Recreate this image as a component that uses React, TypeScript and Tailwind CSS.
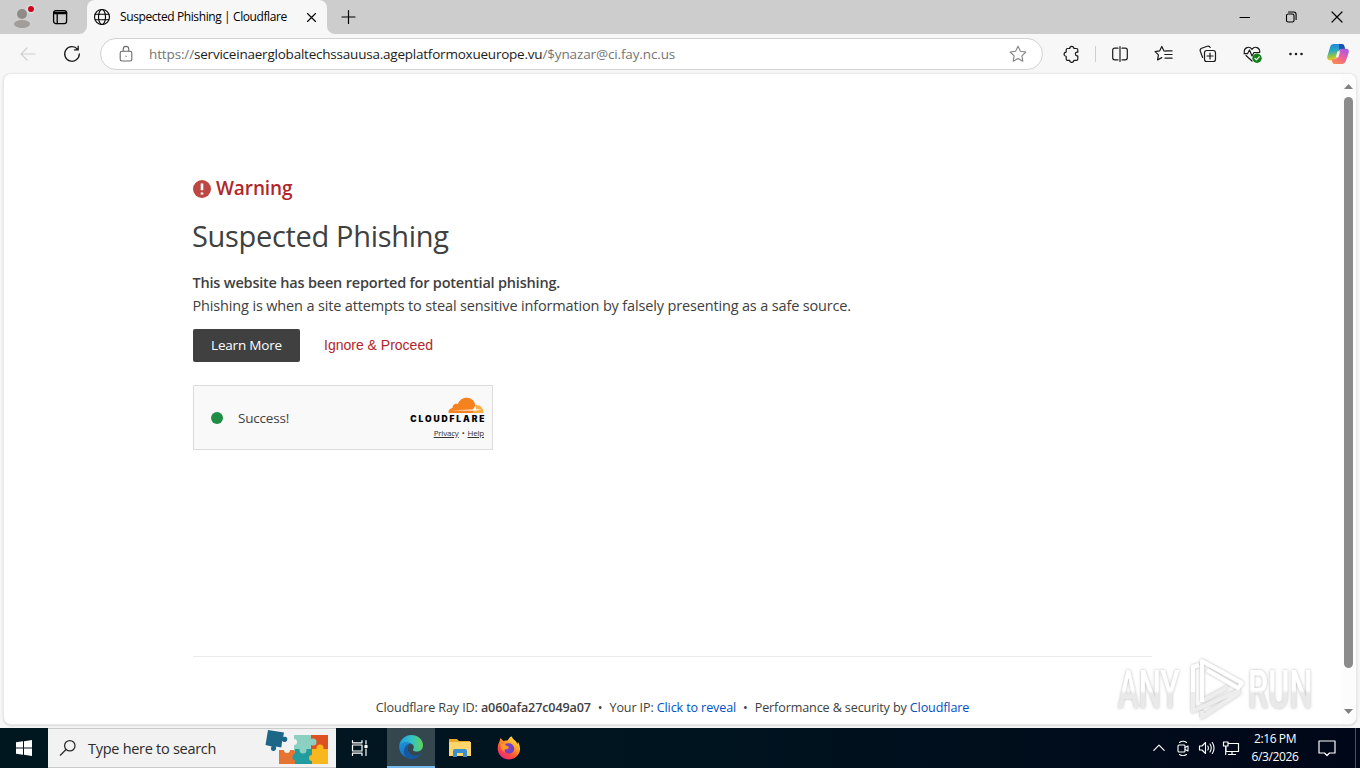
import type { ReactNode } from 'react';

type IconProps = { className?: string; children: ReactNode; box?: string; width?: number };

const Icon = ({ className = 'w-5 h-5', children, box = '0 0 20 20', width = 1.2 }: IconProps) => (
  <svg viewBox={box} className={`block shrink-0 ${className}`} fill="none" stroke="currentColor" strokeWidth={width} strokeLinecap="round" strokeLinejoin="round">
    {children}
  </svg>
);

const TabBar = () => (
  <div className="flex h-[34px] bg-[#cdcdcd] text-black">
    <div className="w-[87px] bg-[#f7f7f7]">
      <div className="flex h-full items-center rounded-br-lg bg-[#cdcdcd]">
        <svg viewBox="0 0 24 24" className="ml-[11px] block h-6 w-6">
          <circle cx="11" cy="9" r="5" fill="#8f8b88" />
          <ellipse cx="11" cy="19" rx="8" ry="4" fill="#a09d9a" />
          <circle cx="20" cy="4" r="4.6" fill="#dcdcdc" />
          <circle cx="20" cy="4" r="3" fill="#d0021b" />
        </svg>
        <Icon className="ml-[15px] h-5 w-5" width={1.3}>
          <rect x="3.6" y="3.6" width="13" height="13" rx="2.4" />
          <path d="M3.6 5.5h13M3.6 6.6h13M7.2 6.6v10" />
        </Icon>
      </div>
    </div>
    <div className="flex w-[240px] items-center rounded-t-lg bg-[#f7f7f7]">
      <Icon className="ml-[5px] h-5 w-5" width={1.1}>
        <circle cx="10" cy="10" r="7.5" />
        <ellipse cx="10" cy="10" rx="3.5" ry="7.5" />
        <path d="M3.2 7.3h13.6M3.2 12.7h13.6" />
      </Icon>
      <span className="ml-2 w-[174px] text-[12px] tracking-[-0.4px] whitespace-nowrap">Suspected Phishing | Cloudflare</span>
      <Icon className="ml-[7px] h-5 w-5" width={1.1}>
        <path d="M6.500 6.500l8 8M14.500 6.500l-8 8" />
      </Icon>
    </div>
    <div className="bg-[#f7f7f7]">
      <div className="h-full rounded-bl-lg bg-[#cdcdcd] pt-[7px] pl-[11px]">
        <Icon className="h-5 w-5" width={1.2}>
          <path d="M10.500 3.500v13M4 10h13" />
        </Icon>
      </div>
    </div>
    <div className="ml-auto flex items-center">
      <Icon className="mr-[26px] h-5 w-5" width={1.1}><path d="M5 10.5h9.5" /></Icon>
      <Icon className="mr-[26px] h-5 w-5" width={1.1}>
        <rect x="5.5" y="7" width="7.5" height="8" rx="1.6" />
        <path d="M7.5 5h5.2a2.4 2.4 0 0 1 2.4 2.4v5" />
      </Icon>
      <Icon className="mr-[13px] h-5 w-5" width={1.2}><path d="M5 5l10 10M15 5L5 15" /></Icon>
    </div>
  </div>
);

const Copilot = () => (
  <svg viewBox="0 0 24 24" className="block h-6 w-6">
    <defs>
      <linearGradient id="copA" x1="0" y1="0" x2="0.2" y2="1">
        <stop offset="0" stopColor="#1b7fe0" />
        <stop offset="0.45" stopColor="#29a9c4" />
        <stop offset="0.75" stopColor="#8bc34a" />
        <stop offset="1" stopColor="#f6c51f" />
      </linearGradient>
      <linearGradient id="copB" x1="0.8" y1="0" x2="0.2" y2="1">
        <stop offset="0" stopColor="#a55ae8" />
        <stop offset="0.5" stopColor="#ef5f9b" />
        <stop offset="1" stopColor="#fb8b4b" />
      </linearGradient>
    </defs>
    <path d="M8 2h7.5c1.6 0 2.3.8 2.8 2.3L19 7h-3c-2 0-2.8.8-3.3 2.4l-2 6.6c-.5 1.8-1.4 2.3-3 2.3H4c-2.3 0-3.3-1.5-2.6-4.2L4 5.400C4.700 3 5.800 2 8 2z" fill="url(#copA)" />
    <path d="M13 2h2.800c1.400 0 2.100.8 2.600 2.300L19 7h-3c-1.400 0-2.300.5-2.800 1.300z" fill="#1c51b5" />
    <path d="M16 22H9c-1.600 0-2.300-.8-2.800-2.300L5.400 17.500H8c2 0 2.800-.8 3.300-2.400l2-6c.5-1.600 1.400-2.300 3-2.300H20c2.300 0 3.300 1.500 2.600 4.200L20 18.600c-.7 2.400-1.800 3.400-4 3.400z" fill="url(#copB)" />
    <path d="M11.500 9.500h2.600l-1.800 6H9.600z" fill="#f7f7f7" />
  </svg>
);

const Toolbar = () => (
  <div className="flex h-[39px] items-center bg-[#f7f7f7] pt-px text-[#1b1b1b]">
    <Icon className="ml-[18px] h-5 w-5 text-[#cfcfcf]"><path d="M17 10H3M9 4l-6 6 6 6" /></Icon>
    <Icon className="ml-6 h-5 w-5" width={1.3}>
      <path d="M15.600 5.300A7.300 7.300 0 1 0 17.300 10M16.200 2.200v3.700h-3.700" />
    </Icon>
    <div className="ml-[18px] flex h-8 w-[943px] items-center rounded-full border border-[#d2d2d2] bg-white">
      <Icon className="ml-[15px] h-5 w-5 text-[#6a6a6a]" width={1.1}>
        <rect x="4.200" y="7.300" width="11.600" height="9.700" rx="1.800" />
        <path d="M7.200 7V5.200a2.800 2.800 0 0 1 5.600 0V7M10 12.100v.3" />
      </Icon>
      <span className="ml-[13px] w-[700px] text-[13.500px] tracking-[-0.13px] whitespace-nowrap text-[#757575]">
        https://<span className="tracking-[-0.22px] text-[#1b1b1b]">serviceinaerglobaltechssauusa.ageplatformoxueurope.vu</span>/$ynazar@ci.fay.nc.us
      </span>
      <Icon className="mr-[14px] ml-auto h-5 w-5 text-[#848484]" width={1.100}>
        <path d="M10 2.300l2.400 4.900 5.400.8-3.900 3.800.9 5.400-4.800-2.600-4.800 2.600.9-5.400L2.200 8l5.400-.8z" />
      </Icon>
    </div>
    <Icon className="ml-[18px] h-5 w-5">
      <path d="M6.500 4.500H8.700a2.100 2.100 0 0 1 4.200 0h2.600a1.300 1.300 0 0 1 1.300 1.300V8.200h-1a1.900 1.900 0 0 0 0 3.700h1v3.100a1.300 1.300 0 0 1-1.300 1.300h-2.600a2.100 2.100 0 0 1-4.200 0H6.500a1.300 1.300 0 0 1-1.300-1.300V12.300a2.100 2.100 0 0 1 0-4.200V5.800A1.300 1.300 0 0 1 6.500 4.500z" />
    </Icon>
    <div className="ml-[14px] h-4 w-px bg-[#cfcfcf]" />
    <Icon className="ml-[14px] h-5 w-5">
      <path d="M8 4.200H4.700a2 2 0 0 0-2 2v7.600a2 2 0 0 0 2 2H8M12 4.200h3.300a2 2 0 0 1 2 2v7.600a2 2 0 0 1-2 2H12M10 2.500v15" />
    </Icon>
    <Icon className="ml-6 h-5 w-5">
      <path d="M12 7.200l-2-.3-2.200-4.400-2.200 4.400-4.500.7 3.300 3.300-.8 5 4.200-2.300M12.300 6.800h5.800M10.800 10.500h7.300M11 14.200h7.100" />
    </Icon>
    <Icon className="ml-6 h-5 w-5">
      <rect x="6.500" y="6.500" width="11" height="11" rx="2.300" />
      <path d="M4.600 13.500L2.300 7.200a2.300 2.300 0 0 1 1.400-2.900l5.600-2a2.300 2.300 0 0 1 2.900 1.200M12 9v6M9 12h6" />
    </Icon>
    <Icon className="ml-6 h-5 w-5">
      <path d="M2.300 8.500c-.5-5 5-7 7.700-3.200 2.700-3.800 8.200-1.800 7.700 3.200M4 11.500l6 5.500M2 9.700h3.500l2-3.700 2.500 6 2-3.500h5" />
      <circle cx="15" cy="14.200" r="4.700" fill="#13801b" stroke="none" />
      <path d="M12.900 14.300l1.500 1.500 2.800-3" stroke="#fff" />
    </Icon>
    <Icon className="ml-6 h-5 w-5" width={2.600}><path d="M4.500 10h.01M10 10h.01M15.500 10h.01" /></Icon>
    <div className="ml-5"><Copilot /></div>
  </div>
);

const CloudLogo = () => (
  <svg viewBox="0 0 36 17" className="block h-[17px] w-9">
    <path d="M.5 16c-.3-3 1.500-4.800 4-5C4.300 7.800 7.500 5.900 9.800 7.300 11.200 2.600 15.200.3 19.300.7c4.400.4 7.300 3.300 7.900 7L25.500 16z" fill="#f6821f" />
    <path d="M25.500 16l1.700-8c4.500-.7 8.500 3 8.300 8z" fill="#fbad41" />
    <path d="M3 13.300l22-.7 2.300-3.700.8 3.300 5.400.4-5.500 1.100z" fill="#fff" />
  </svg>
);

const Content = () => (
  <div className="ml-[3px] flex h-[652px] w-[1354px] rounded-lg border border-[#e8e8e8] bg-white shadow-sm">
    <main className="flex flex-1 flex-col pl-[189px] text-[#404040]">
      <div className="mt-[100px] flex h-[30px] items-center text-[#b0262a]">
        <svg viewBox="0 0 18 18" className="block h-[18px] w-[18px]">
          <circle cx="9" cy="9" r="9" fill="#bd4742" />
          <path d="M9 3.500v6.700M9 12.600v1.800" stroke="#fff" strokeWidth="2.600" />
        </svg>
        <span className="ml-[5px] pb-px text-[19px] font-semibold tracking-[-0.1px]">Warning</span>
      </div>
      <h1 className="mt-[11px] -ml-px h-[42px] text-[29px] leading-[42px] font-normal tracking-[-0.32px] whitespace-nowrap">Suspected Phishing</h1>
      <p className="mt-[14px] -ml-[0.500px] text-[14.500px] leading-[23px] font-semibold tracking-[-0.2px] whitespace-nowrap">
        <span className="block w-fit">This website has been reported for potential phishing.</span>
        <span className="block w-fit font-normal tracking-[-0.155px]">Phishing is when a site attempts to steal sensitive information by falsely presenting as a safe source.</span>
      </p>
      <div className="mt-3 flex h-[33px] items-center">
        <button className="h-[33px] w-[107px] rounded-[2px] bg-[#404040] text-[13.500px] tracking-[-0.2px] whitespace-nowrap text-white">Learn More</button>
        <button className="ml-6 font-['Liberation_Sans',sans-serif] text-[14px] whitespace-nowrap text-[#b0262a]">Ignore &amp; Proceed</button>
      </div>
      <div className="mt-[23px] flex h-[65px] w-[300px] items-center border border-[#dcdcdc] bg-[#f9f9f9]">
        <div className="ml-[17px] h-3 w-3 rounded-full bg-[#1e8e45]" />
        <span className="ml-[15px] pt-px text-[13.500px] tracking-[-0.2px]">Success!</span>
        <div className="mr-2 ml-auto flex flex-col items-end">
          <CloudLogo />
          <span className="mt-px mr-[-2.400px] font-[Inter,sans-serif] text-[8.500px] leading-[9px] font-black tracking-[1.900px] text-black">CLOUDFLARE</span>
          <div className="mt-1 flex gap-[3px] text-[8px] leading-[10px] tracking-[-0.2px] text-[#333]">
            <span className="underline">Privacy</span><span>•</span><span className="underline">Help</span>
          </div>
        </div>
      </div>
      <div className="mt-[206px] h-px w-[959px] bg-[#ebebeb]" />
      <footer className="mt-[41px] flex h-5 w-[959px] items-center justify-center text-[12.600px] tracking-[-0.13px] whitespace-pre">
        <span>Cloudflare Ray ID: <b className="font-semibold">a060afa27c049a07</b></span>
        <span className="mx-[7px]">•</span>
        <span>Your IP: <span className="text-[#0051c3]">Click to reveal</span></span>
        <span className="mx-[7px]">•</span>
        <span>Performance &amp; security by <span className="text-[#0051c3]">Cloudflare</span></span>
      </footer>
    </main>
    <div className="flex w-[15px] flex-col items-center rounded-r-lg bg-[#fcfcfc]">
      <svg viewBox="0 0 9 5" className="mt-[10px] block h-[5px] w-[9px]"><path d="M0 5L4.500 0 9 5z" fill="#808080" /></svg>
      <div className="mt-2 h-[571px] w-[9px] rounded-full bg-[#8b8b8b]" />
      <svg viewBox="0 0 9 5" className="mt-[41px] block h-[5px] w-[9px]"><path d="M0 0L4.500 5 9 0z" fill="#808080" /></svg>
    </div>
  </div>
);

const Watermark = () => (
  <svg viewBox="0 0 230 78" className="absolute top-[650px] left-[1110px] h-[78px] w-[230px]">
    <defs>
      <linearGradient id="wm" x1="0" y1="0" x2="0" y2="1">
        <stop offset="0.5" stopColor="#fff" />
        <stop offset="0.56" stopColor="#e9e9e9" />
      </linearGradient>
      <filter id="glow" x="-10%" y="-20%" width="120%" height="140%">
        <feDropShadow dx="0" dy="0" stdDeviation="1.500" floodColor="#777" floodOpacity="0.55" />
      </filter>
    </defs>
    <g filter="url(#glow)">
      <g fill="url(#wm)" fontFamily="Roboto" fontWeight="500">
        <text transform="translate(8 58) scale(0.59 1)" fontSize="53">ANY</text>
        <text transform="translate(138 58) scale(0.61 1)" fontSize="53">RUN</text>
      </g>
      <g fill="none" strokeWidth="4" strokeLinejoin="round">
        <path d="M83 38v23l47-21M92 61v6l38-25" stroke="#ededed" />
        <path d="M92 51l26-14" stroke="#ededed" />
        <path d="M83 42V17l6-2M92 52V11l40 22-4 5-31-18" stroke="#fff" />
      </g>
    </g>
  </svg>
);

const Puzzle = () => (
  <svg viewBox="0 0 64 36" className="block h-9 w-16">
    <path d="M14 20h16v14H14z" fill="#e57332" />
    <path d="M29 5h18v16H29z" fill="#8bd0c0" />
    <path d="M46 5h17v15H46z" fill="#dc5223" />
    <path d="M30 19h18v15H30z" fill="#229d9f" />
    <path d="M47 19h16v15H47z" fill="#f7b71d" />
    <circle cx="38" cy="20" r="3.500" fill="#8bd0c0" />
    <circle cx="48" cy="12" r="3.500" fill="#8bd0c0" />
    <circle cx="55" cy="18" r="3.500" fill="#f7b71d" />
    <circle cx="31" cy="27" r="3.500" fill="#229d9f" />
    <circle cx="47" cy="28" r="3" fill="#f7b71d" />
    <circle cx="22" cy="20" r="3" fill="#f2f2f2" />
    <circle cx="29" cy="12" r="3" fill="#f2f2f2" />
    <path d="M3 0l16 2.500-.8 4.500c2-1 5 0 4 3s-4 2-5 1l-.9 6.500-5.500-1c1 2 0 4.500-2.500 4.500s-3-3-1.500-4.500L.5 15z" fill="#1c6688" />
  </svg>
);

const Edge = () => (
  <svg viewBox="0 0 24 24" className="block h-6 w-6">
    <defs>
      <linearGradient id="edA" x1="0" y1="0.3" x2="1" y2="0.3">
        <stop offset="0" stopColor="#239be0" />
        <stop offset="0.5" stopColor="#31c0c8" />
        <stop offset="1" stopColor="#60d35a" />
      </linearGradient>
      <linearGradient id="edB" x1="0" y1="0" x2="0.6" y2="1">
        <stop offset="0" stopColor="#2193dc" />
        <stop offset="1" stopColor="#1267b8" />
      </linearGradient>
    </defs>
    <path d="M.2 11C1.200 4 6.500 0 12.200 0 19 0 24 4.800 24 10.200c0 4.500-3.400 6.400-6.300 6.400-3.500 0-4-1.200-3.600-2 1.500-2.200.9-4.600-2.200-6C7.800 6.800 2 7.500.2 11z" fill="url(#edA)" />
    <path d="M.2 11C2.600 6.500 8.600 6.200 11.900 8.600 8.700 9.600 7.500 12.600 8.700 16c1.500 4 6.500 6.300 10.500 5.300A12 12 0 0 1 .2 11z" fill="url(#edB)" />
    <path d="M11.900 8.600C8.200 10 7.600 14 9.200 17c2.600 4.700 9 4.800 13 1.200-2 4-6.200 5.800-10.200 5.800C6 23.500 3.500 18 5.700 13c1.300-2.800 3.700-4.300 6.200-4.400z" fill="#1259a5" />
  </svg>
);

const Firefox = () => (
  <svg viewBox="0 0 24 24" className="block h-6 w-6">
    <defs>
      <linearGradient id="ffA" x1="0.85" y1="0" x2="0.2" y2="1">
        <stop offset="0" stopColor="#fff14a" />
        <stop offset="0.4" stopColor="#ff9d25" />
        <stop offset="0.7" stopColor="#ff4a3c" />
        <stop offset="1" stopColor="#e5238f" />
      </linearGradient>
    </defs>
    <path d="M2.500 5.500L3.500 2l2.800 3c1.500-.7 3-.7 4.200-.4C11.500 2.500 13 1 15 .3c-.2 3 4.500 4 5.500 8l.5-2.500c2 3.500 3 8 .8 12A11.300 11.300 0 0 1 12 23.500C5 23.500.5 18 .7 12.200c0-2.700.8-5 1.800-6.700z" fill="url(#ffA)" />
    <path d="M8 8.500c2-1.800 5.500-1.600 7.500.2 2.800 2.600 2.200 7.200-1.500 8.500-3.500 1.100-6.800-1.200-6.500-4.200 1.500 1.200 3.600.5 4.300-1-1.800-.2-3.800-1.700-3.800-3.500z" fill="#7641c9" />
    <path d="M4 8c1-1 3-1 4 .5.500 1 2 1.700 4 2-.5 2-2.500 2-3.700 2.500C7 13.500 7 15 8 16c-3-1-5-4-4-8z" fill="#ff9a2a" />
  </svg>
);

const Taskbar = () => (
  <div className="flex h-10 items-center bg-linear-to-r from-[#00171f] via-[#001420] to-[#000718] text-white">
    <svg viewBox="0 0 16 16" className="mx-4 block h-4 w-4" fill="#fff">
      <path d="M0 2.300l7-1v6.200H0zM8 1.200L16 0v7.500H8zM0 8.500h7v6.200l-7-1zM8 8.500h8V16l-8-1.200z" />
    </svg>
    <div className="flex h-10 w-72 items-center border-y border-[#c9c9c9] bg-[#f2f2f2] text-[#2b2b2b]">
      <Icon className="ml-[11px] h-[18px] w-[18px]" width={1.400}>
        <circle cx="12" cy="7.500" r="5.800" /><path d="M7.800 11.700L1.500 18" />
      </Icon>
      <span className="ml-[11px] w-[176px] pt-px text-[14.500px] tracking-[-0.28px] whitespace-nowrap">Type here to search</span>
      <div className="ml-px"><Puzzle /></div>
    </div>
    <Icon className="mr-[17px] ml-[14px] h-5 w-5" width={1.200}>
      <path d="M2.500 2.500v2.300h9.500V2.500M2.500 17.500v-2.300h9.500v2.300M2.500 7h9.500v6H2.500zM16 2.500v3.500M16 11v6.500" />
      <path d="M15 7.500h2v2h-2z" fill="#fff" />
    </Icon>
    <div className="flex h-10 w-12 items-center justify-center border-b-2 border-[#76b9ed] bg-[#34474f]"><Edge /></div>
    <svg viewBox="0 0 22 18" className="ml-[14px] block h-[18px] w-[22px]">
      <path d="M0 0h8l2 2h11v4H0z" fill="#e8a92b" />
      <path d="M0 3h22v14H0z" fill="#fcd66b" />
      <path d="M4 18v-6a2 2 0 0 1 2-2h10a2 2 0 0 1 2 2v6h-4v-4H8v4z" fill="#3a8fcf" />
    </svg>
    <div className="ml-[26px]"><Firefox /></div>
    <div className="mr-1 ml-auto flex items-center">
      <Icon className="h-4 w-4" width={1.500}><path d="M3.500 13L10 6.500l6.500 6.500" /></Icon>
      <Icon className="ml-2 h-4 w-4" box="0 0 16 16" width={1.100}>
        <rect x="3" y="5" width="7" height="7" rx="1" /><path d="M10 7.500l3-1.500v5l-3-1.500M4.500 2.500Q8 0 11.500 2.500M4.500 14.500Q8 17 11.500 14.500" />
      </Icon>
      <Icon className="ml-[7px] h-[18px] w-[18px]" box="0 0 18 18" width={1.100}>
        <path d="M1.500 7h2.500L7.500 3.500v11L4 11H1.500zM9.800 7q1.200 2 0 4M12 5q2.500 4 0 8M14.300 3.500q3.500 5.500 0 11" />
      </Icon>
      <Icon className="ml-[6px] h-[18px] w-[18px]" box="0 0 18 18" width={1.200}>
        <path d="M6 4.500h10.500v8H4V8M10 12.500v3M6.500 15.500h7M1.500 3h4.500v4H1.500zM3.700 7v8.500" />
      </Icon>
      <div className="ml-[9px] flex w-[52px] flex-col items-center text-[12px] leading-[18px] tracking-[-0.4px] whitespace-nowrap">
        <span>2:16 PM</span><span>6/3/2026</span>
      </div>
      <Icon className="ml-4 h-5 w-5" width={1.200}>
        <path d="M2 3h16v12h-5.500L10 17.500 7.500 15H2z" />
      </Icon>
      <div className="ml-[18px] h-10 w-px bg-[#43505d]" />
    </div>
  </div>
);

export default function App() {
  return (
    <div className="relative flex h-[768px] w-[1360px] flex-col overflow-hidden bg-[#f7f7f7] font-['Open_Sans',sans-serif]">
      <TabBar />
      <Toolbar />
      <Content />
      <div className="flex-1" />
      <Taskbar />
      <Watermark />
    </div>
  );
}
